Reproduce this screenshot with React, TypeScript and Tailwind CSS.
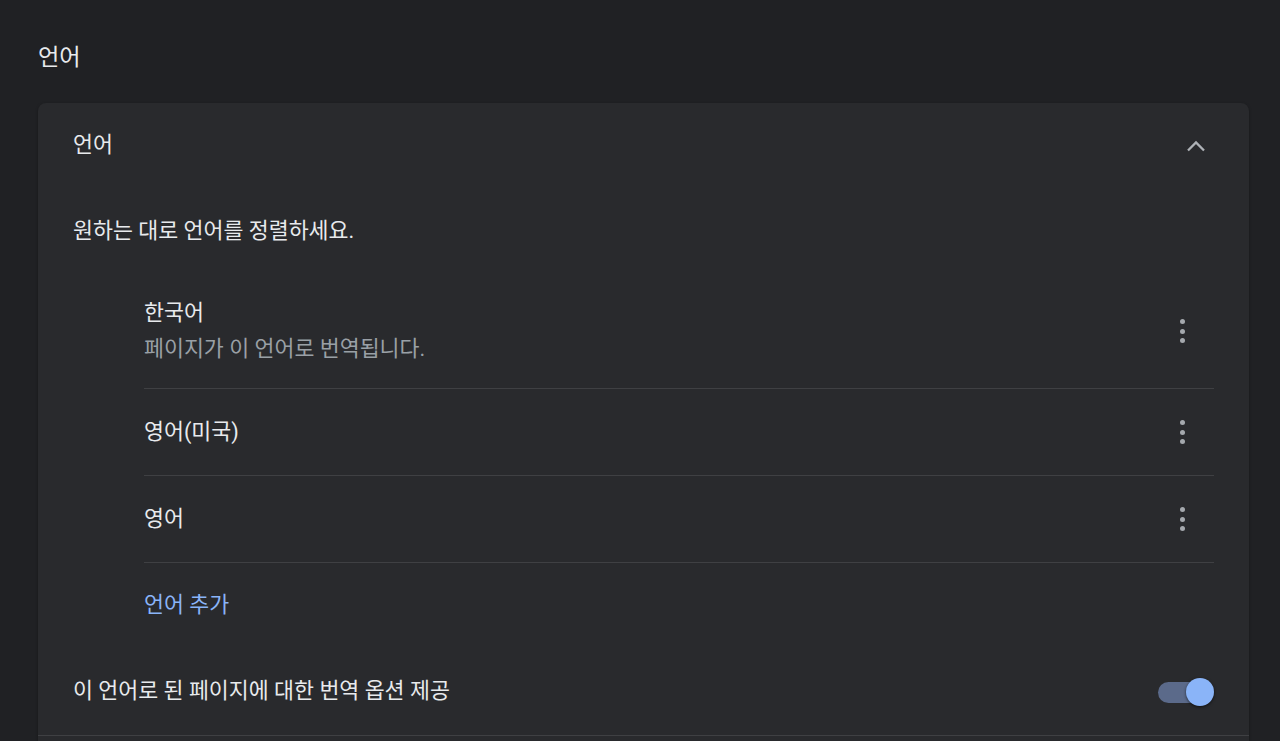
import React from 'react';

const languages = [
  { name: '한국어', note: '페이지가 이 언어로 번역됩니다.' },
  { name: '영어(미국)' },
  { name: '영어' },
];

const Kebab = () => (
  <div className="w-[64px] h-[40px] flex flex-col items-center justify-center gap-[4.5px]">
    <span className="block w-[5px] h-[5px] rounded-full bg-[#a4a8ad]" />
    <span className="block w-[5px] h-[5px] rounded-full bg-[#a4a8ad]" />
    <span className="block w-[5px] h-[5px] rounded-full bg-[#a4a8ad]" />
  </div>
);

export default function App() {
  return (
    <div
      className="min-h-[741px] bg-[#202124] text-[#e8eaed] text-[21.7px] overflow-hidden"
      style={{ fontFamily: 'Roboto, "Noto Sans CJK KR", sans-serif' }}
    >
      <div className="pl-[38px] pr-[31px]">
        <div className="h-[103px] pt-[12px] flex items-center text-[23.2px]">언어</div>

        <div className="bg-[#292a2d] rounded-t-[8px] shadow-[0_1px_3px_rgba(0,0,0,0.35)]">
          {/* header */}
          <div className="h-[85px] pl-[35px] pr-[43px] flex items-center justify-between">
            <span>언어</span>
            <svg width="20" height="12" viewBox="0 0 20 12" fill="none">
              <polyline points="2,10.5 10,2.5 18,10.5" stroke="#aeb2b7" strokeWidth="2.3" />
            </svg>
          </div>

          <div className="h-[86px] px-[35px] flex items-center">원하는 대로 언어를 정렬하세요.</div>

          {/* language list */}
          <div className="pl-[106px] pr-[35px]">
            {languages.map((lang, i) => (
              <div
                key={lang.name}
                className={
                  'flex items-center justify-between border-b border-[#3f4043] ' +
                  (i === 0 ? 'h-[115px]' : 'h-[87px]')
                }
              >
                <div className="flex flex-col leading-[30px]">
                  <span>{lang.name}</span>
                  {lang.note && <span className="mt-[6px] text-[#9aa0a6]">{lang.note}</span>}
                </div>
                <Kebab />
              </div>
            ))}
            <div className="h-[85px] flex items-center text-[#8ab4f8]">언어 추가</div>
          </div>

          {/* translate toggle */}
          <div className="h-[88px] px-[35px] flex items-center justify-between border-b border-[#3f4043]">
            <span>이 언어로 된 페이지에 대한 번역 옵션 제공</span>
            <div className="relative w-[56px] h-[28px]">
              <div className="absolute left-0 top-[4px] w-[48px] h-[21px] rounded-full bg-[#5b6a8a]" />
              <div className="absolute right-0 top-0 w-[28px] h-[28px] rounded-full bg-[#8ab4f8] shadow-[0_1px_3px_rgba(0,0,0,0.6)]" />
            </div>
          </div>
          <div className="h-[40px]" />
        </div>
      </div>
    </div>
  );
}
